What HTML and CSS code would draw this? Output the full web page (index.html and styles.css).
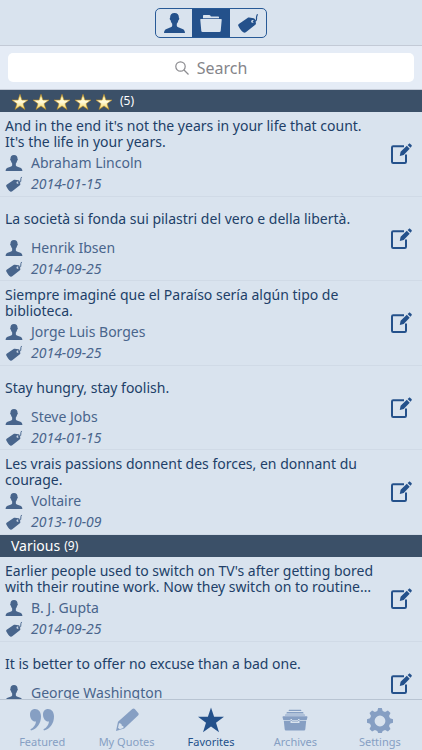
FILE: index.html
```html
<!DOCTYPE html>
<html lang="en">
<head>
<meta charset="utf-8">
<meta name="viewport" content="width=device-width, initial-scale=1">
<title>Favorites</title>
<link rel="stylesheet" href="styles.css">
</head>
<body>
<svg class="sprite" aria-hidden="true">
  <defs>
    <linearGradient id="gold" x1="0" y1="0" x2="0" y2="1"><stop offset="0" stop-color="#fff08a"/><stop offset=".5" stop-color="#fffadc"/><stop offset="1" stop-color="#f7d75a"/></linearGradient>
  </defs>
  <symbol id="person" viewBox="0 0 21 20"><path d="M10.500 0C7.500 0 6 1.900 6.100 4.700c-.7.200-.4 2.100.5 2.600.3 1.600.8 2.600 1.600 3.400v2.400c-.5 1.400-3.300 1.900-5.700 2.900C.8 16.700.2 17.800 0 20h21c-.2-2.200-.8-3.300-2.500-4-2.400-1-5.200-1.500-5.700-2.900v-2.400c.8-.8 1.300-1.800 1.600-3.400.9-.5 1.200-2.400.5-2.600C15 1.900 13.500 0 10.500 0z" fill="currentColor"/></symbol>
  <symbol id="tag" viewBox="0 0 20 20"><path fill="currentColor" fill-rule="evenodd" d="M.8 11 9.500 5c.5-.4 1-.5 1.600-.4l4.500.6c.8.100 1.300.5 1.500 1.300l.8 3.500c.1.700 0 1.200-.6 1.700l-9.500 7.500c-.8.600-1.700.7-2.500.1C3.500 18.200 1.800 15.800.4 13c-.4-.8-.3-1.500.4-2zM14.500 7a1.400 1.400 0 1 0 .1 2.800A1.400 1.400 0 0 0 14.500 7z"/><path d="M14.800 8.400c2.600.3 4-1 3.700-3.400-.1-1.500.2-2.300 1-3.800" fill="none" stroke="currentColor" stroke-width="1.200"/></symbol>
  <symbol id="edit" viewBox="0 0 22 22"><path d="M14 3.200H3.200c-.8 0-1.200.4-1.200 1.200v14.400c0 .8.400 1.200 1.200 1.200h11.600c.8 0 1.200-.4 1.200-1.200V11.500" fill="none" stroke="currentColor" stroke-width="2"/><path d="M9.800 13 10.600 8.800l6.200-6 2.900 2.900-6 6.200zM17.600 2l1.200-1.100c.5-.5 1-.5 1.500 0l1.200 1.200c.5.500.5 1 0 1.500l-1.100 1.200z" fill="currentColor"/></symbol>
  <symbol id="star" viewBox="0 0 26 25"><path d="M13 0 16.100 9.300H26l-8 5.900 3 9.500-8-5.800-8 5.800 3-9.500-8-5.900h9.900z"/></symbol>
</svg>

<div class="app">
  <header class="topbar">
    <div class="segments" role="group" aria-label="Group by">
      <button class="segment" type="button" aria-label="Author"><svg class="segment-person"><use href="#person"/></svg></button>
      <button class="segment selected" type="button" aria-label="Folder"><svg class="segment-icon" viewBox="0 0 22 19"><path fill="currentColor" d="M3 4V2.500c0-.7.400-1 1-1h5.200c.7 0 1 .3 1.300.8l.4.700H18c.7 0 1 .3 1 1v.700H3zM1.200 5.600h19.600c.7 0 1 .4.900 1l-1 10.900c-.1.700-.5 1-1.200 1h-17c-.7 0-1.100-.3-1.200-1l-1-10.900c-.1-.6.200-1 .9-1z"/></svg></button>
      <button class="segment" type="button" aria-label="Tag"><svg class="segment-icon"><use href="#tag"/></svg></button>
    </div>
  </header>

  <div class="search">
    <label class="search-box">
      <svg class="search-icon" viewBox="0 0 14 14" aria-hidden="true"><circle cx="5.500" cy="5.500" r="4.700"/><path d="m9 9 4.500 4.500"/></svg>
      <input class="search-input" type="search" placeholder="Search" aria-label="Search">
    </label>
  </div>

  <main class="list">
    <section>
      <h2 class="group-title">
        <span class="stars" role="img" aria-label="5 stars">
          <svg class="gold"><use href="#star"/></svg><svg class="gold"><use href="#star"/></svg><svg class="gold"><use href="#star"/></svg><svg class="gold"><use href="#star"/></svg><svg class="gold"><use href="#star"/></svg>
        </span>
        <span class="count">(5)</span>
      </h2>
      <article class="quote">
        <div class="text"><p>And in the end it's not the years in your life that count. It's the life in your years.</p></div>
        <div class="meta"><svg class="person"><use href="#person"/></svg>Abraham Lincoln</div>
        <div class="meta date"><svg class="tag"><use href="#tag"/></svg><time>2014-01-15</time></div>
        <button class="edit" type="button" aria-label="Edit quote"><svg><use href="#edit"/></svg></button>
      </article>
      <article class="quote">
        <div class="text"><p>La società si fonda sui pilastri del vero e della libertà.</p></div>
        <div class="meta"><svg class="person"><use href="#person"/></svg>Henrik Ibsen</div>
        <div class="meta date"><svg class="tag"><use href="#tag"/></svg><time>2014-09-25</time></div>
        <button class="edit" type="button" aria-label="Edit quote"><svg><use href="#edit"/></svg></button>
      </article>
      <article class="quote">
        <div class="text"><p>Siempre imaginé que el Paraíso sería algún tipo de biblioteca.</p></div>
        <div class="meta"><svg class="person"><use href="#person"/></svg>Jorge Luis Borges</div>
        <div class="meta date"><svg class="tag"><use href="#tag"/></svg><time>2014-09-25</time></div>
        <button class="edit" type="button" aria-label="Edit quote"><svg><use href="#edit"/></svg></button>
      </article>
      <article class="quote">
        <div class="text"><p>Stay hungry, stay foolish.</p></div>
        <div class="meta"><svg class="person"><use href="#person"/></svg>Steve Jobs</div>
        <div class="meta date"><svg class="tag"><use href="#tag"/></svg><time>2014-01-15</time></div>
        <button class="edit" type="button" aria-label="Edit quote"><svg><use href="#edit"/></svg></button>
      </article>
      <article class="quote">
        <div class="text"><p>Les vrais passions donnent des forces, en donnant du courage.</p></div>
        <div class="meta"><svg class="person"><use href="#person"/></svg>Voltaire</div>
        <div class="meta date"><svg class="tag"><use href="#tag"/></svg><time>2013-10-09</time></div>
        <button class="edit" type="button" aria-label="Edit quote"><svg><use href="#edit"/></svg></button>
      </article>
    </section>
    <section>
      <h2 class="group-title">Various <span class="count">(9)</span></h2>
      <article class="quote">
        <div class="text"><p>Earlier people used to switch on TV's after getting bored with their routine work. Now they switch on to routine…</p></div>
        <div class="meta"><svg class="person"><use href="#person"/></svg>B. J. Gupta</div>
        <div class="meta date"><svg class="tag"><use href="#tag"/></svg><time>2014-09-25</time></div>
        <button class="edit" type="button" aria-label="Edit quote"><svg><use href="#edit"/></svg></button>
      </article>
      <article class="quote">
        <div class="text"><p>It is better to offer no excuse than a bad one.</p></div>
        <div class="meta"><svg class="person"><use href="#person"/></svg>George Washington</div>
        <button class="edit" type="button" aria-label="Edit quote"><svg><use href="#edit"/></svg></button>
      </article>
    </section>
  </main>

  <nav class="tabs">
    <a class="tab" href="#featured"><svg viewBox="0 0 26 26"><path fill="currentColor" d="M1 7.500C1 4.200 3.100 2 6 2c3.600 0 6 2.900 6 7.500C12 16.500 8 22 2 23.500l-.6-1.200c3.200-1.600 5.300-4.400 5.600-7.800C3.500 15 1 11.500 1 7.500zm13 0C14 4.200 16.100 2 19 2c3.600 0 6 2.900 6 7.500 0 7-4 12.500-10 14l-.6-1.200c3.200-1.600 5.300-4.400 5.600-7.800-3.500.5-6-3-6-7z"/></svg>Featured</a>
    <a class="tab" href="#quotes"><svg viewBox="0 0 26 26"><path fill="currentColor" fill-rule="evenodd" d="M2 24 4 14.800 18.300 2c.9-.8 1.800-.7 2.500.1l3.400 3.900c.7.800.6 1.700-.2 2.500L10.200 21.500zM5 16.300l-1 4.600c.8.200 1.400.7 1.600 1.400l3.700-1.200c.6-1.500 0-2.400-1.500-2.300.1-1.600-.9-2.700-2.800-2.500z"/></svg>My Quotes</a>
    <a class="tab current" href="#favorites" aria-current="page"><svg viewBox="0 0 26 26"><use href="#star" width="26" height="26" fill="currentColor"/></svg>Favorites</a>
    <a class="tab" href="#archives"><svg viewBox="0 0 26 26"><path fill="currentColor" fill-rule="evenodd" d="M7.500 2.800h11c.5 0 .8.300.9 1.200H6.600c.1-.9.400-1.200.9-1.200zM5.500 5h15c.6 0 1 .4 1.100 1.600H4.400C4.500 5.400 4.900 5 5.500 5zM3.500 7.600h19c.3 0 .5.300.6.900H2.900c.1-.6.300-.9.600-.9zM1.600 9.300h22.800c.8 0 1.200.5 1 1.300L24.700 13H1.300L.6 10.600c-.2-.8.200-1.300 1-1.300zM1.800 13.800h22.400l-.9 8.400c-.1.900-.7 1.300-1.500 1.300H4.200c-.8 0-1.400-.4-1.500-1.300zM8.500 12v4h9v-4H16v2.500h-6V12z"/></svg>Archives</a>
    <a class="tab" href="#settings"><svg viewBox="0 0 26 26"><path fill="currentColor" fill-rule="evenodd" d="M11.200 1h3.600l.9 3 2.400 1 2.800-1.500 2.600 2.600L22 8.900l1 2.400 3 .9v3.600l-3 .9-1 2.400 1.500 2.800-2.600 2.600-2.800-1.500-2.400 1-.9 2h-3.600l-.9-2-2.400-1-2.800 1.500-2.600-2.600L4 19.100l-1-2.400-3-.9v-3.600l3-.9 1-2.400-1.500-2.800 2.600-2.600L7.900 5l2.400-1zM13 8.600a5.400 5.400 0 1 0 0 10.800 5.400 5.400 0 0 0 0-10.800z"/></svg>Settings</a>
  </nav>
</div>
</body>
</html>
```
FILE: styles.css
```css
* {
  box-sizing: border-box;
}

body {
  margin: 0;
  background: #d9e3ee;
  color: #213f68;
  font: 14px/16px "Trebuchet MS", "Noto Sans", sans-serif;
}

button {
  border: 0;
  padding: 0;
  background: none;
  color: inherit;
}

.sprite {
  position: absolute;
  width: 0;
  height: 0;
}

.app {
  display: flex;
  flex-direction: column;
  height: 100vh;
}

.topbar {
  display: flex;
  justify-content: center;
  padding: 8px 0 7px;
  border-bottom: 1px solid #c3cad6;
}

.segments {
  display: flex;
  height: 30px;
  border: 1px solid #285a97;
  border-radius: 5px;
  overflow: hidden;
}

.segment {
  display: flex;
  align-items: center;
  justify-content: center;
  width: 36px;
  color: #24518b;
}

.segment.selected {
  width: 38px;
  background: #24518b;
  color: #d9e3ee;
}

.segment-person {
  width: 21px;
  height: 20px;
}

.segment-icon {
  width: 22px;
  height: 20px;
}

.search {
  padding: 7px 8px;
  background: #e5ecf6;
}

.search-box {
  display: flex;
  align-items: center;
  justify-content: center;
  gap: 8px;
  height: 29px;
  border-radius: 5px;
  background: #fff;
}

.search-icon {
  width: 14px;
  height: 14px;
  fill: none;
  stroke: #8c8c90;
  stroke-width: 1.2;
}

.search-input {
  field-sizing: content;
  border: 0;
  padding: 0;
  outline: 0;
  background: none;
  appearance: none;
  font: 16px/20px "Trebuchet MS", "Noto Sans", sans-serif;
}

.search-input::placeholder {
  color: #85858a;
}

.list {
  flex: 1;
  min-height: 0;
  overflow-y: auto;
  scrollbar-width: none;
  border-top: 1px solid #c3cad6;
}

.group-title {
  display: flex;
  align-items: center;
  gap: 4px;
  height: 22px;
  margin: 0;
  padding: 0 11px;
  background: #3b5068;
  color: #fff;
  font-size: 14px;
  font-weight: 400;
}

.count {
  font-size: 12px;
}

.stars {
  display: flex;
  gap: 3px;
  padding: 2px 3px 0 0;
}

.gold {
  width: 18px;
  height: 18px;
  padding: 1px;
  overflow: visible;
  fill: url(#gold);
  stroke: #b98a22;
}

.quote {
  display: grid;
  grid-template-columns: 1fr 32px;
  grid-template-rows: 41px 20px 22px;
  height: 85px;
  padding-left: 5px;
  border-bottom: 1px solid #d0dae6;
}

.quote:nth-of-type(even) {
  height: 84px;
}

.text {
  display: flex;
  align-items: center;
  padding: 2px 10px 0 0;
}

.text p {
  margin: 0;
}

.meta {
  display: flex;
  grid-column: 1;
  align-items: center;
  gap: 8px;
  color: #49658c;
}

.date {
  font-style: italic;
}

.person,
.tag {
  width: 18px;
  height: 16px;
  color: #48658c;
}

.edit {
  display: flex;
  grid-column: 2;
  grid-row: 1 / 4;
  align-items: center;
  color: #24518b;
}

.edit svg {
  width: 22px;
  height: 22px;
}

.tabs {
  display: flex;
  height: 51px;
  border-top: 1px solid #b8c4d2;
}

.tab {
  display: flex;
  flex: 1;
  flex-direction: column;
  align-items: center;
  gap: 2px;
  padding-top: 7px;
  color: #869fc3;
  font-size: 11px;
  line-height: 14px;
  text-decoration: none;
}

.tab svg {
  width: 26px;
  height: 26px;
}

.tab.current {
  color: #24518b;
}
```
